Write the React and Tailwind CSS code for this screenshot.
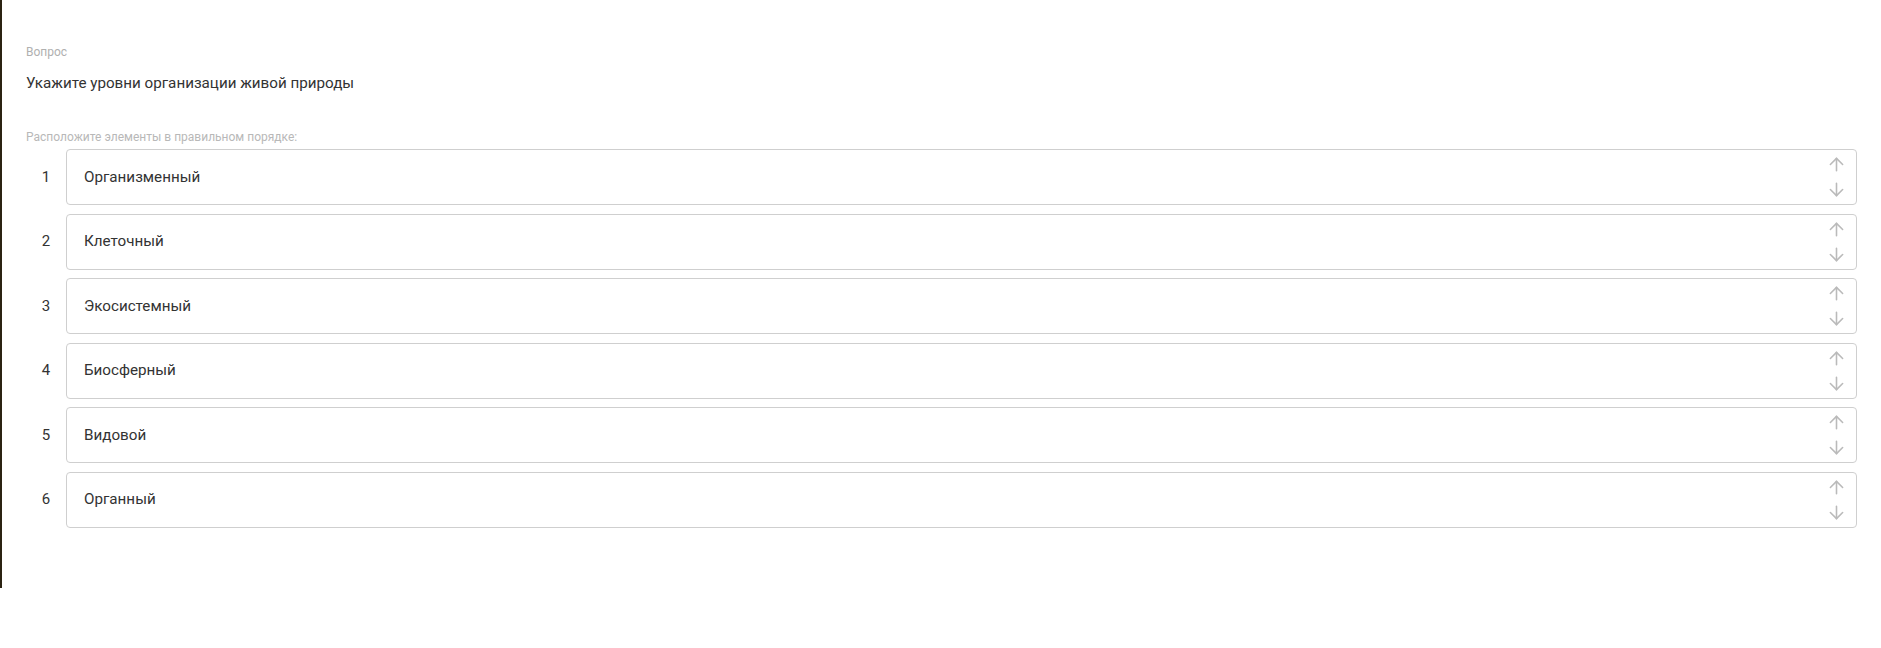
import { ArrowUp, ArrowDown } from "lucide-react";

const items = [
  "Организменный",
  "Клеточный",
  "Экосистемный",
  "Биосферный",
  "Видовой",
  "Органный",
];

function OrderRow({ index, label }) {
  return (
    <div className="flex items-stretch">
      <div className="w-[40px] shrink-0 flex items-center justify-center text-[15px] text-[#333]">
        {index}
      </div>
      <div className="flex-1 h-[56px] flex items-center justify-between border border-[#cfcfcf] rounded-[4px] bg-white pl-[17px] pr-[9px]">
        <span className="text-[15.2px] text-[#333]">{label}</span>
        <div className="flex flex-col items-center gap-[4px] text-[#bababa]">
          <ArrowUp size={21} strokeWidth={1.8} />
          <ArrowDown size={21} strokeWidth={1.8} />
        </div>
      </div>
    </div>
  );
}

export default function App() {
  return (
    <div className="bg-white" style={{ fontFamily: "Roboto, 'Noto Sans', sans-serif" }}>
      <div className="h-[588px] border-l-2 border-[#2b2312] pl-[24px] pr-[24px] pt-[44px]">
        <div className="text-[12px] leading-[16px] text-[#b0b0b0]">Вопрос</div>
        <div className="mt-[13px] text-[15.2px] leading-[20px] text-[#333]">
          Укажите уровни организации живой природы
        </div>
        <div className="mt-[36px] text-[12px] leading-[16px] text-[#b8b8b8]">
          Расположите элементы в правильном порядке:
        </div>
        <div className="mt-[4px] flex flex-col gap-[8.5px]">
          {items.map((label, i) => (
            <OrderRow key={label} index={i + 1} label={label} />
          ))}
        </div>
      </div>
    </div>
  );
}
